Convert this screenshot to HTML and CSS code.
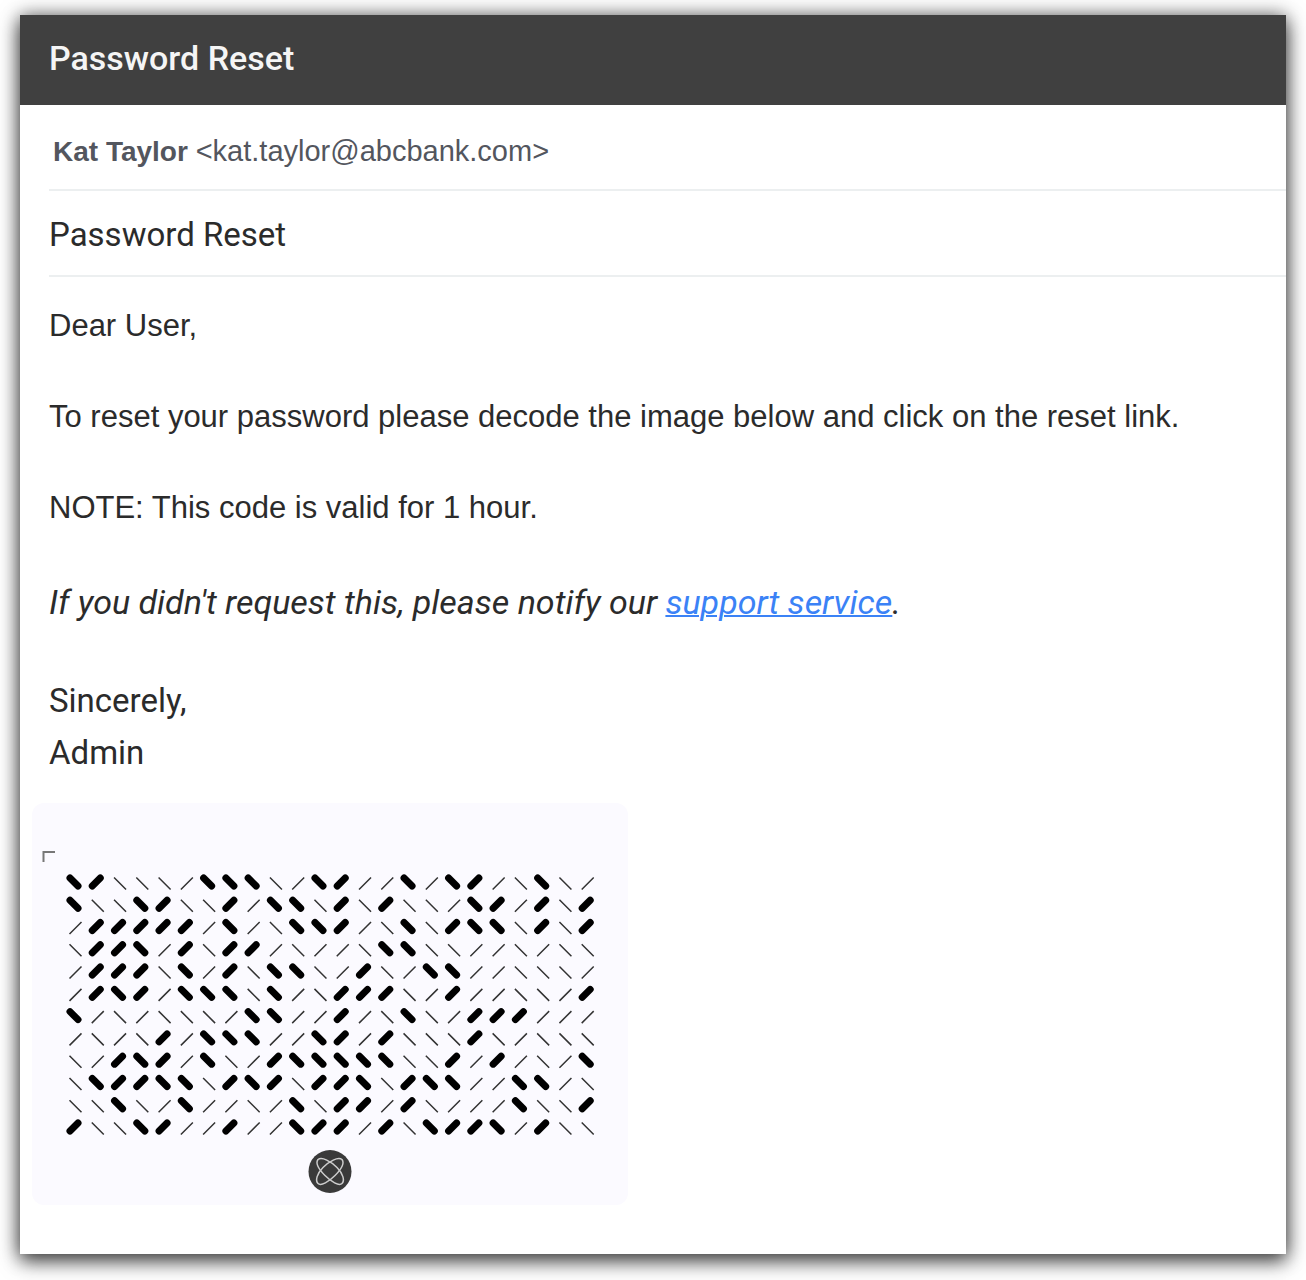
FILE: index.html
```
<!DOCTYPE html>
<html lang="en">
<head>
<meta charset="utf-8">
<meta name="viewport" content="width=device-width, initial-scale=1">
<title>Password Reset</title>
<link rel="stylesheet" href="styles.css">
</head>
<body>
<article class="mail">
  <header class="mail-bar"><h1 class="mail-title">Password Reset</h1></header>
  <div class="mail-from"><strong>Kat Taylor</strong> <span class="mail-address">&lt;kat.taylor@abcbank.com&gt;</span></div>
  <h2 class="mail-subject">Password Reset</h2>
  <div class="mail-body">
    <p class="plain">Dear User,</p>
    <p class="plain">To reset your password please decode the image below and click on the reset link.</p>
    <p class="plain">NOTE: This code is valid for 1 hour.</p>
    <p class="notice">If you didn't request this, please notify our <a href="#support">support service</a>.</p>
    <p class="signature">Sincerely,<br>Admin</p>
  </div>
  <figure class="code">
    <svg class="code-image" viewBox="0 0 596 402" role="img" aria-label="Reset code">
      <path class="corner" d="M11.500 59V49H23"/>
      <path class="mark-heavy" id="heavy"/>
      <path class="mark-light" id="light"/>
      <circle class="badge" cx="298" cy="368.500" r="21.500"/>
      <g class="orbit" transform="translate(298 368.500)">
        <path d="M-12 -12C-8 -15 1 -10 7 -4S15 9 12 12S1 10 -5 4S-15 -8 -12 -12Z"/>
        <path d="M12 -12C8 -15 -1 -10 -7 -4S-15 9 -12 12S-1 10 5 4S15 -8 12 -12Z"/>
      </g>
    </svg>
  </figure>
</article>
<script src="code.js"></script>
</body>
</html>
```
FILE: styles.css
```
* { box-sizing: border-box; }
body {
  margin: 0;
  padding: 15px 20px 26px;
  background: #fff;
  color: #2b2b2b;
  font-family: Roboto, sans-serif;
}
.mail {
  padding-bottom: 49px;
  background: #fff;
  box-shadow: 0 0 18px rgba(0, 0, 0, .5), 0 8px 18px rgba(0, 0, 0, .6);
}
.mail-bar {
  padding: 23px 29px 27px;
  background: #404040;
  color: #f5f5f5;
}
.mail-title { margin: 0; font-size: 34px; line-height: 40px; font-weight: 500; }
.mail-from {
  margin-left: 29px;
  padding: 26px 4px 17px;
  border-bottom: 2px solid #eceff0;
  color: #53565e;
  font: 28px/40px "Liberation Sans", Arial, sans-serif;
}
.mail-address { font-size: 29px; }
.mail-subject {
  margin: 0 0 0 29px;
  padding: 24px 0 20px;
  border-bottom: 2px solid #eceff0;
  font-size: 33px;
  line-height: 40px;
  font-weight: 400;
}
.mail-body { padding: 26px 29px 0; }
.mail-body p { margin: 0; }
.plain { padding-bottom: 46px; font: 31px/45px "Liberation Sans", Arial, sans-serif; }
.mail-body .notice { padding: 4px 0 50px; font-size: 34px; line-height: 45px; font-style: italic; }
.notice a { color: #3b82f6; text-decoration-thickness: 2px; }
.signature { font-size: 33px; line-height: 52px; }
.code {
  width: 596px;
  max-width: 100%;
  margin: 24px 12px 0;
  border-radius: 12px;
  background: #fbfaff;
}
.code-image { display: block; width: 100%; }
.code-image path, .orbit { fill: none; }
.corner { stroke: #777; stroke-width: 2; }
.mark-heavy { stroke: #000; stroke-width: 7; stroke-linecap: round; }
.mark-light { stroke: #333; stroke-width: 1.5; }
.badge { fill: #3a3a3a; }
.orbit { stroke: #ccc; stroke-width: 1.5; }
```
FILE: code.js
```
// B / F: heavy back / forward slash, b / f: light back / forward slash.
const rows = [
  'BFbbbfBBBbfBFffBfBFfbBbf',
  'BbbBFbbFfBBbFbFbbfBFfFbF',
  'fFFFFFfBfbBBFfbBbFBBbFbF',
  'bFFBfFbFFfbffbBBbbffbfbb',
  'fFFFbBfFbBBbfFbfBBffbbbf',
  'fFBFfBBBbBfbFFFbfFffbbfF',
  'BfbfbbbfBBffFfbBbfFFFfff',
  'fbfbFfBBBffBFfFbbbFbfbbb',
  'bfFBFfBbfFBBBBBbbFfFfbfB',
  'bBFFBBbFBFbFFBbFBBffBBfb',
  'bbBbfBffbfBbFFfFbfffBbbF',
  'FbbBFffFffBFFfFbBFFBfFbb'
];
const step = 22.27;
const paths = { heavy: '', light: '' };
rows.forEach((row, r) => [...row].forEach((mark, c) => {
  const heavy = mark === mark.toUpperCase();
  const reach = heavy ? 4 : 6;
  const x = 42 + c * step + (heavy ? 0 : 1.5);
  const y = 79 + r * step + (heavy ? 0 : 1.5);
  const rise = mark.toUpperCase() === 'B' ? reach : -reach;
  paths[heavy ? 'heavy' : 'light'] += `M${x - reach} ${y - rise}L${x + reach} ${y + rise}`;
}));
document.getElementById('heavy').setAttribute('d', paths.heavy);
document.getElementById('light').setAttribute('d', paths.light);
```
